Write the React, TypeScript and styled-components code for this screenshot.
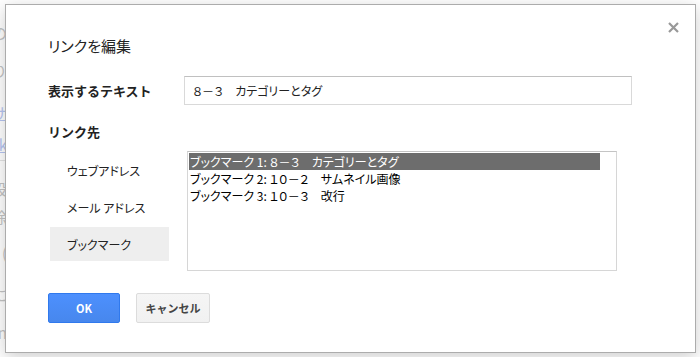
import React, { useState } from 'react';
import styled, { createGlobalStyle } from 'styled-components';

const GlobalStyle = createGlobalStyle`
  html, body {
    margin: 0;
    padding: 0;
    background: #ffffff;
  }
  body {
    font-family: "Noto Sans CJK JP", "Noto Sans", sans-serif;
    color: #222;
  }
`;

type LinkKind = 'web' | 'mail' | 'bookmark';

const kinds: { id: LinkKind; label: string }[] = [
  { id: 'web', label: 'ウェブアドレス' },
  { id: 'mail', label: 'メール アドレス' },
  { id: 'bookmark', label: 'ブックマーク' },
];

const bookmarks = [
  { no: 1, title: '８－３　カテゴリーとタグ' },
  { no: 2, title: '１０－２　サムネイル画像' },
  { no: 3, title: '１０－３　改行' },
];

// the document page that lies behind the modal; only its left edge shows
const pageLines = [
  { text: 'ドキュメントの', top: 22, link: false },
  { text: 'リンクを貼り', top: 60, link: false },
  { text: 'ウェブサ', top: 102, link: true },
  { text: 'Facebook', top: 134, link: true },
  { text: '設', top: 178, link: false },
  { text: '削除', top: 206, link: false },
  { text: '(', top: 242, link: false },
  { text: 'ることに', top: 284, link: false },
  { text: 'Open', top: 322, link: false },
];

export default function App() {
  const [kind, setKind] = useState<LinkKind>('bookmark');
  const [selected, setSelected] = useState(1);

  return (
    <>
      <GlobalStyle />
      <Screen>
        <PageBehind>
          {pageLines.map(l => (
            <PageLine key={l.top} $top={l.top} $link={l.link}>
              {l.text}
            </PageLine>
          ))}
          <PageRule />
        </PageBehind>
        <Dialog>
          <CloseButton aria-label="閉じる">
            <svg width="11" height="11" viewBox="0 0 11 11">
              <path d="M1 1 L10 10 M10 1 L1 10" stroke="#999" strokeWidth="2.2" />
            </svg>
          </CloseButton>
          <Title>リンクを編集</Title>
          <TextRow>
            <FieldLabel>表示するテキスト</FieldLabel>
            <TextInput defaultValue="８－３　カテゴリーとタグ" />
          </TextRow>
          <SectionLabel>リンク先</SectionLabel>
          <TargetRow>
            <KindList>
              {kinds.map(k => (
                <KindTab key={k.id} $active={kind === k.id} onClick={() => setKind(k.id)}>
                  {k.label}
                </KindTab>
              ))}
            </KindList>
            <BookmarkBox>
              {bookmarks.map(b => (
                <BookmarkItem key={b.no} $selected={selected === b.no} onClick={() => setSelected(b.no)}>
                  ブックマーク {b.no}: {b.title}
                </BookmarkItem>
              ))}
            </BookmarkBox>
          </TargetRow>
          <ButtonRow>
            <PrimaryButton>OK</PrimaryButton>
            <SecondaryButton>キャンセル</SecondaryButton>
          </ButtonRow>
        </Dialog>
      </Screen>
    </>
  );
}

const Screen = styled.div`
  position: relative;
  width: 700px;
  height: 357px;
  overflow: hidden;
  background: #fff;
`;

const PageBehind = styled.div`
  position: relative;
  width: 100%;
  height: 100%;
`;

const PageLine = styled.div<{ $top: number; $link: boolean }>`
  position: absolute;
  top: ${p => p.$top}px;
  right: 693px;
  font-size: 15px;
  white-space: nowrap;
  color: ${p => (p.$link ? '#b6c4f0' : '#c4c4c4')};
  text-decoration: ${p => (p.$link ? 'underline' : 'none')};
`;

const PageRule = styled.div`
  position: absolute;
  top: 160px;
  left: 0;
  width: 8px;
  border-top: 1px solid #e3e3e3;
`;

const Dialog = styled.div`
  position: absolute;
  top: 4px;
  left: 5px;
  box-sizing: border-box;
  width: 691px;
  height: 349px;
  padding: 30px 0 0 42px;
  background: #fff;
  border: 1px solid #acacac;
  box-shadow: 0 4px 16px rgba(0, 0, 0, 0.2);
  display: flex;
  flex-direction: column;
`;

const CloseButton = styled.button`
  position: absolute;
  top: 17px;
  right: 16px;
  display: flex;
  padding: 0;
  background: none;
  border: none;
  cursor: pointer;
`;

const Title = styled.div`
  height: 22px;
  font-size: 15px;
  line-height: 22px;
  color: #222;
  font-feature-settings: 'palt';
`;

const TextRow = styled.div`
  display: flex;
  align-items: center;
  margin-top: 19px;
`;

const FieldLabel = styled.div`
  width: 136px;
  font-size: 13px;
  font-weight: bold;
  color: #222;
`;

const TextInput = styled.input`
  box-sizing: border-box;
  width: 448px;
  height: 29px;
  padding: 0 8px;
  font-family: "Noto Sans CJK JP", sans-serif;
  font-size: 12px;
  color: #222;
  font-feature-settings: 'palt';
  border: 1px solid #d9d9d9;
  border-top-color: #c0c0c0;
  outline: none;
`;

const SectionLabel = styled.div`
  margin-top: 17px;
  height: 20px;
  line-height: 20px;
  font-size: 13px;
  font-weight: bold;
  color: #222;
`;

const TargetRow = styled.div`
  display: flex;
  margin-top: 9px;
`;

const KindList = styled.div`
  display: flex;
  flex-direction: column;
  gap: 3px;
  width: 139px;
  margin-top: 2px;
`;

const KindTab = styled.div<{ $active: boolean }>`
  box-sizing: border-box;
  width: 119px;
  height: 34px;
  margin-left: 2px;
  padding-left: 17px;
  display: flex;
  align-items: center;
  font-size: 12px;
  color: #222;
  font-feature-settings: 'palt';
  background: ${p => (p.$active ? '#eeeeee' : 'transparent')};
  cursor: pointer;
`;

const BookmarkBox = styled.div`
  box-sizing: border-box;
  width: 430px;
  height: 120px;
  padding: 1px 16px 1px 1px;
  border: 1px solid #d6d6d6;
  border-top-color: #c4c4c4;
`;

const BookmarkItem = styled.div<{ $selected: boolean }>`
  height: 17px;
  padding-left: 1px;
  font-size: 12px;
  line-height: 17px;
  white-space: nowrap;
  font-feature-settings: 'palt';
  color: ${p => (p.$selected ? '#fff' : '#000')};
  background: ${p => (p.$selected ? '#6d6d6d' : 'transparent')};
  cursor: default;
`;

const ButtonRow = styled.div`
  display: flex;
  gap: 16px;
  margin-top: 22px;
`;

const BaseButton = styled.button`
  box-sizing: border-box;
  height: 30px;
  padding: 0;
  font-family: "Noto Sans CJK JP", sans-serif;
  font-size: 11px;
  font-weight: bold;
  border-radius: 2px;
  cursor: pointer;
`;

const PrimaryButton = styled(BaseButton)`
  width: 72px;
  color: #fff;
  background: linear-gradient(#4d90fe, #4787ed);
  border: 1px solid #3079ed;
`;

const SecondaryButton = styled(BaseButton)`
  width: 74px;
  color: #444;
  background: linear-gradient(#f5f5f5, #f1f1f1);
  border: 1px solid #dcdcdc;
`;
